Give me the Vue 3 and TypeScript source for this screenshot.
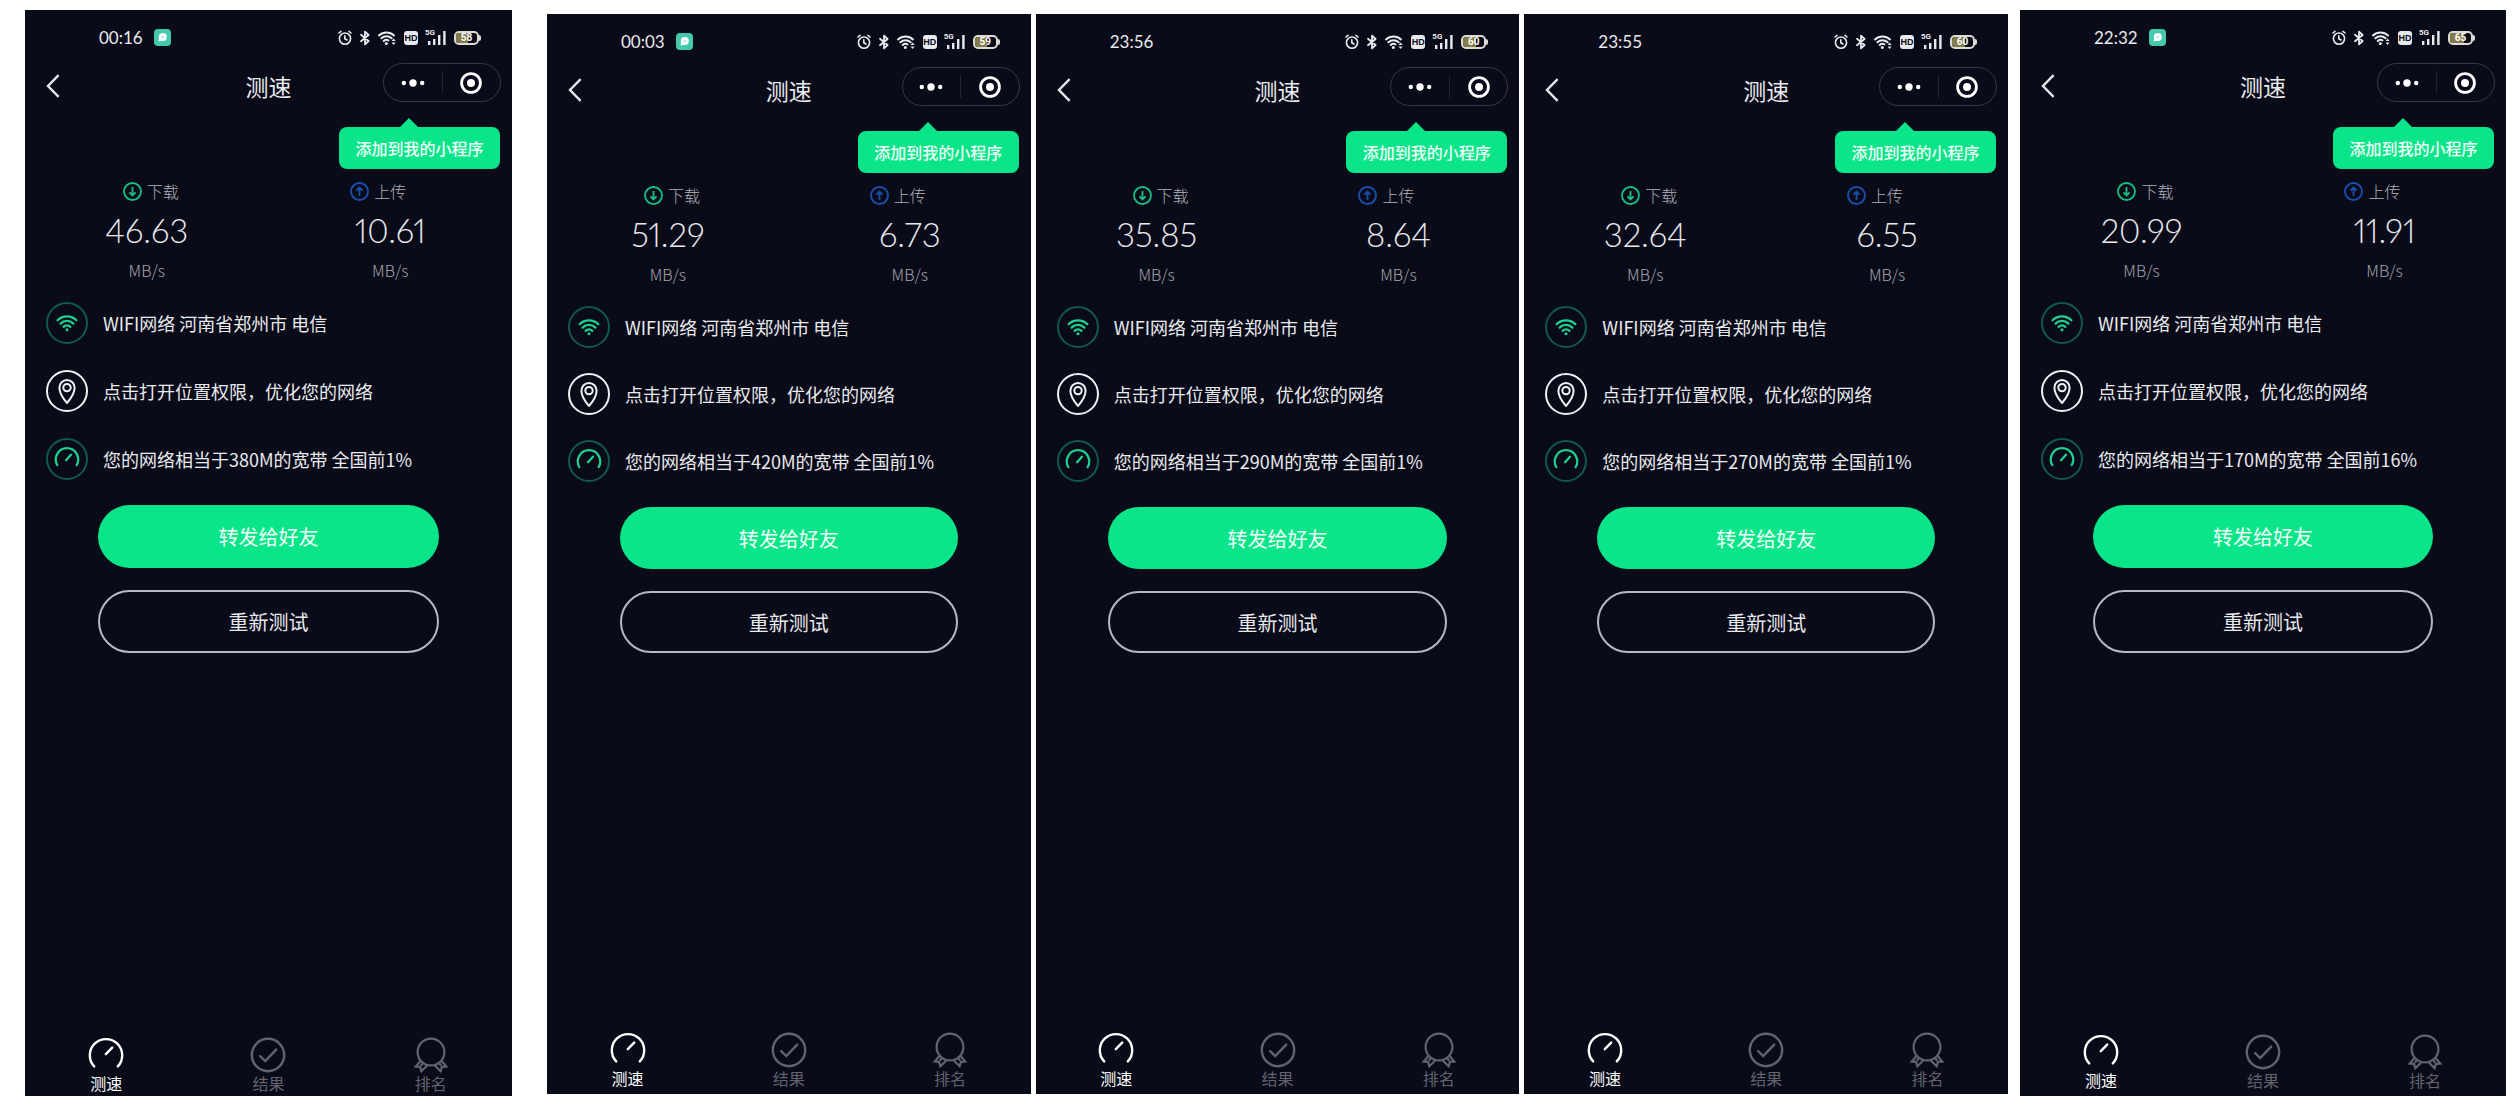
<script setup lang="ts">
interface Screen {
  id: number
  time: string
  chat: boolean
  battery: number
  download: string
  upload: string
  bandwidth: string
  rank: string
  size: 'tall' | 'regular'
  lowTabs?: boolean
}

const groups: Screen[][] = [
  [
    { id: 1, time: '00:16', chat: true, battery: 58, download: '46.63', upload: '10.61', bandwidth: '380M', rank: '1%', size: 'tall', lowTabs: true },
  ],
  [
    { id: 2, time: '00:03', chat: true, battery: 59, download: '51.29', upload: '6.73', bandwidth: '420M', rank: '1%', size: 'regular' },
    { id: 3, time: '23:56', chat: false, battery: 60, download: '35.85', upload: '8.64', bandwidth: '290M', rank: '1%', size: 'regular' },
    { id: 4, time: '23:55', chat: false, battery: 60, download: '32.64', upload: '6.55', bandwidth: '270M', rank: '1%', size: 'regular' },
  ],
  [
    { id: 5, time: '22:32', chat: true, battery: 65, download: '20.99', upload: '11.91', bandwidth: '170M', rank: '16%', size: 'tall' },
  ],
]
</script>

<template>
  <main class="board">
    <div v-for="(group, g) in groups" :key="g" class="group">
      <section
        v-for="s in group"
        :key="s.id"
        class="screen"
        :class="[`screen--${s.size}`, { 'screen--low-tabs': s.lowTabs }]"
      >
        <div class="status">
          <span class="time">{{ s.time }}</span>
          <svg v-if="s.chat" class="chat" width="17" height="17" viewBox="0 0 17 17">
            <rect width="17" height="17" rx="4" fill="#44c9ae" />
            <circle cx="8.8" cy="8" r="4" fill="#fff" />
            <path d="M5.4 9 4.4 12.4l3.6-1z" fill="#fff" />
            <circle cx="8.8" cy="8" r="1.1" fill="#9fe3d5" />
          </svg>
          <div class="indicators">
            <svg width="14" height="16" viewBox="0 0 14 16" fill="none" stroke="#e9eaee" stroke-width="1.6" stroke-linecap="round">
              <circle cx="7" cy="8.6" r="5.6" />
              <path d="M1 3 3 1.4M13 3 11 1.4M6.8 5.8V8.8L9 10" />
            </svg>
            <svg width="10" height="16" viewBox="0 0 10 16" fill="none" stroke="#e9eaee" stroke-width="1.8" stroke-linejoin="round" stroke-linecap="round">
              <path d="M1 4.8 8.6 11 5 14.4V1.6L8.6 5 1 11.2" />
            </svg>
            <svg width="18" height="16" viewBox="0 0 18 16" fill="none" stroke="#e9eaee" stroke-width="2" stroke-linecap="round">
              <path d="M1 5.4a11 11 0 0 1 15 0M3.4 8.3a7.4 7.4 0 0 1 10.2 0M5.8 11a4 4 0 0 1 4.6-.6" />
              <circle cx="8.3" cy="13.6" r="1.5" fill="#e9eaee" stroke="none" />
              <path d="M15.6 8.6 17.6 11h-4zM15.6 15 13.6 12.6h4z" fill="#e9eaee" stroke="none" />
            </svg>
            <span class="hd">HD</span>
            <span class="signal">
              <span class="generation">5G</span>
              <svg width="20" height="15" viewBox="0 0 20 15" fill="#e9eaee">
                <rect x="2" y="11" width="2.4" height="4" />
                <rect x="7" y="9" width="2.4" height="6" />
                <rect x="12" y="5" width="2.4" height="10" />
                <rect x="17.2" y="1" width="2.4" height="14" />
              </svg>
            </span>
            <span class="battery">
              <span class="cell">
                <span class="charge" :style="{ width: s.battery + '%' }"></span>
                <span class="percent">{{ s.battery }}</span>
              </span>
              <span class="terminal"></span>
            </span>
          </div>
        </div>

        <header class="header">
          <button class="back" type="button" aria-label="返回">
            <svg width="14" height="24" viewBox="0 0 14 24" fill="none" stroke="#e6e7ec" stroke-width="2.4">
              <path d="M12.6 1.2 2 12l10.6 10.8" />
            </svg>
          </button>
          <h1 class="title">测速</h1>
          <div class="capsule">
            <button type="button" aria-label="更多">
              <svg width="24" height="8" viewBox="0 0 24 8" fill="#fff">
                <circle cx="2.8" cy="4" r="2.2" />
                <circle cx="12" cy="4" r="3.7" />
                <circle cx="21.2" cy="4" r="2.2" />
              </svg>
            </button>
            <span class="divider"></span>
            <button type="button" aria-label="关闭">
              <svg width="22" height="22" viewBox="0 0 22 22">
                <circle cx="11" cy="11" r="9.4" fill="none" stroke="#fff" stroke-width="2.8" />
                <circle cx="11" cy="11" r="4" fill="#fff" />
              </svg>
            </button>
          </div>
        </header>

        <div class="tip">添加到我的小程序</div>

        <div class="metrics">
          <div class="metric">
            <div class="label label--down">
              <svg width="19" height="19" viewBox="0 0 19 19" fill="none" stroke="#19bd84" stroke-width="1.8">
                <circle cx="9.5" cy="9.5" r="8.5" />
                <path d="M9.5 5v8.4M6.4 10.4l3.1 3.1 3.1-3.1" />
              </svg>
              <span>下载</span>
            </div>
            <div class="value">{{ s.download }}</div>
            <div class="unit">MB/s</div>
          </div>
          <div class="metric">
            <div class="label label--up">
              <svg width="19" height="19" viewBox="0 0 19 19" fill="none" stroke="#1a4fb0" stroke-width="1.8">
                <circle cx="9.5" cy="9.5" r="8.5" />
                <path d="M9.5 14V5.6M6.4 8.6l3.1-3.1 3.1 3.1" />
              </svg>
              <span>上传</span>
            </div>
            <div class="value">{{ s.upload }}</div>
            <div class="unit">MB/s</div>
          </div>
        </div>

        <ul class="facts">
          <li>
            <svg width="42" height="42" viewBox="0 0 42 42" fill="none" stroke="#1fd090" stroke-width="2.3" stroke-linecap="round">
              <circle cx="21" cy="21" r="20" stroke="#115a4a" stroke-width="2" />
              <path d="M11.6 18.2a13.4 13.4 0 0 1 18.8 0M14.6 21.6a9 9 0 0 1 12.8 0M17.6 24.8a5 5 0 0 1 6.8 0" />
              <circle cx="21" cy="27.8" r="1.5" fill="#1fd090" stroke="none" />
            </svg>
            <span>WIFI网络 河南省郑州市 电信</span>
          </li>
          <li>
            <svg width="42" height="42" viewBox="0 0 42 42" fill="none" stroke="#f0f1f5" stroke-width="2" stroke-linejoin="round">
              <circle cx="21" cy="21" r="20" />
              <path d="M21 33c-2.6-3-7.6-9.4-7.6-15.3a7.6 7.6 0 0 1 15.2 0c0 5.9-5 12.3-7.6 15.3z" />
              <circle cx="21" cy="17.6" r="3.7" />
            </svg>
            <span>点击打开位置权限，优化您的网络</span>
          </li>
          <li>
            <svg width="42" height="42" viewBox="0 0 42 42" fill="none" stroke="#1fd090" stroke-width="2.3" stroke-linecap="round">
              <circle cx="21" cy="21" r="20" stroke="#115a4a" stroke-width="2" />
              <path d="M11.3 27a11.2 11.2 0 1 1 19.4 0M20 22.2l5-5.4" />
            </svg>
            <span>您的网络相当于{{ s.bandwidth }}的宽带 全国前{{ s.rank }}</span>
          </li>
        </ul>

        <div class="actions">
          <button class="action action--primary" type="button">转发给好友</button>
          <button class="action action--outline" type="button">重新测试</button>
        </div>

        <nav class="tabs">
          <a class="tab tab--active" href="#speed">
            <svg width="36" height="36" viewBox="0 0 36 36" fill="none" stroke="currentColor" stroke-width="2.4" stroke-linecap="round">
              <path d="M6.2 29.4a16.2 16.2 0 1 1 23.6 0M17.8 17.2l6.4-6.6" />
            </svg>
            <span>测速</span>
          </a>
          <a class="tab" href="#result">
            <svg width="36" height="36" viewBox="0 0 36 36" fill="none" stroke="currentColor" stroke-width="2.4" stroke-linecap="round">
              <circle cx="18" cy="18" r="16.2" />
              <path d="M10.2 19.2l5 4.8 11-11.4" />
            </svg>
            <span>结果</span>
          </a>
          <a class="tab" href="#rank">
            <svg width="36" height="36" viewBox="0 0 36 36" fill="none" stroke="currentColor" stroke-width="2.2">
              <circle cx="18" cy="15" r="13.4" />
              <path d="M7.4 24 2.8 29.6l4.2.2 1.4 4.4 6-6M28.6 24l4.6 5.6-4.2.2-1.4 4.4-6-6" />
              <path d="M9.8 26.4l-2 2.4M26.2 26.4l2 2.4" />
            </svg>
            <span>排名</span>
          </a>
        </nav>
      </section>
    </div>
  </main>
</template>

<style>
body {
  background: #fff;
}
</style>

<style scoped>
.board {
  box-sizing: border-box;
  min-height: 100vh;
  padding: 10px 10px 10px 25px;
  display: grid;
  grid-template-columns: 487fr 1484fr 486fr;
  column-gap: 12px;
  font-family: "Noto Sans CJK SC", sans-serif;
  color: #e9eaee;
}

.group {
  display: flex;
  gap: 5px;
}

.group:nth-child(2) {
  padding: 4px 0 2px 23px;
}

.screen {
  --row-gap: 25px;
  --button-height: 62px;
  --tabs-bottom: 5px;
  flex: 1 1 0;
  min-width: 0;
  display: flex;
  flex-direction: column;
  background: #090b19;
}

.screen--tall {
  --row-gap: 26px;
  --button-height: 63px;
}

.screen--low-tabs {
  --tabs-bottom: 2px;
}

button {
  padding: 0;
  border: 0;
  background: none;
  font: inherit;
  color: inherit;
}

svg {
  display: block;
  flex: none;
}

.status {
  box-sizing: border-box;
  height: 53px;
  padding: 2px 31px 0 74px;
  display: flex;
  align-items: center;
}

.time {
  font-family: Lato, sans-serif;
  font-size: 17px;
  line-height: 20px;
}

.chat {
  margin-left: 11px;
}

.indicators {
  margin-left: auto;
  display: flex;
  align-items: center;
  gap: 8px;
}

.hd {
  width: 14px;
  border-radius: 3px;
  background: #e9eaee;
  color: #090b19;
  font: bold 9px/14px "Liberation Sans", sans-serif;
  text-align: center;
}

.signal {
  position: relative;
}

.generation {
  position: absolute;
  left: -1px;
  top: -1px;
  font: bold 8px/8px Roboto, sans-serif;
}

.battery {
  display: flex;
  align-items: center;
}

.cell {
  position: relative;
  box-sizing: border-box;
  width: 25px;
  height: 14px;
  border: 2px solid #dcdcd6;
  border-radius: 5px;
  overflow: hidden;
}

.charge {
  display: block;
  height: 100%;
  background: #857b48;
}

.percent {
  position: absolute;
  inset: 0;
  color: #fff;
  font: bold 10px/10px Roboto, sans-serif;
  text-align: center;
}

.terminal {
  width: 2px;
  height: 6px;
  border-radius: 0 2px 2px 0;
  background: #dcdcd6;
}

.header {
  height: 39px;
  padding: 0 11px 0 21px;
  display: grid;
  grid-template-columns: 1fr auto 1fr;
  align-items: end;
}

.back,
.title {
  height: 32px;
  display: flex;
  align-items: center;
  justify-self: start;
}

.title {
  margin: 0 0 0 -10px;
  font-size: 23px;
  line-height: 32px;
  font-weight: 400;
}

.capsule {
  box-sizing: border-box;
  width: 118px;
  height: 39px;
  border: 1px solid #373843;
  border-radius: 20px;
  justify-self: end;
  display: flex;
  align-items: center;
}

.capsule button {
  flex: 1;
  display: flex;
  justify-content: center;
}

.divider {
  width: 1px;
  height: 23px;
  background: #22232f;
}

.tip {
  position: relative;
  align-self: flex-end;
  box-sizing: border-box;
  width: 161px;
  margin: 25px 12px 0 0;
  border-radius: 8px;
  background: #0ae58a;
  color: #f2fff9;
  font-size: 16px;
  line-height: 42px;
  font-weight: 500;
  text-align: center;
}

.tip::before {
  content: "";
  position: absolute;
  right: 93px;
  top: -9px;
  border: 9px solid transparent;
  border-top-width: 0;
  border-bottom-color: #0ae58a;
  margin-right: -11px;
}

.metrics {
  margin-top: 11px;
  display: grid;
  grid-template-columns: 1fr 1fr;
  text-align: center;
}

.label {
  display: flex;
  justify-content: center;
  align-items: center;
  gap: 5px;
  color: #b0b1b9;
  font-size: 16px;
  line-height: 22px;
  font-weight: 300;
}

.label--down {
  padding-left: 8px;
}

.label--up {
  padding-right: 24px;
}

.value {
  margin-top: 8px;
  font-family: Lato, sans-serif;
  font-size: 33px;
  line-height: 40px;
  font-weight: 300;
  font-variant-numeric: proportional-nums;
}

.unit {
  margin-top: 10px;
  color: #a3a4ad;
  font-size: 16px;
  line-height: 20px;
  font-weight: 300;
}

.facts {
  margin: 22px 0 0;
  padding: 0 0 0 21px;
  list-style: none;
  display: flex;
  flex-direction: column;
  gap: var(--row-gap);
}

.facts li {
  display: flex;
  align-items: center;
  gap: 15px;
  font-size: 18px;
  line-height: 24px;
  white-space: nowrap;
}

.actions {
  margin-top: 25px;
  padding: 0 15%;
  display: flex;
  flex-direction: column;
  gap: 22px;
}

.action {
  box-sizing: border-box;
  height: var(--button-height);
  border-radius: 32px;
  font-size: 20px;
}

.action--primary {
  background: #0ae58a;
  color: #f2fff9;
}

.action--outline {
  border: 2px solid #b7b8c1;
}

.tabs {
  margin-top: auto;
  padding-bottom: var(--tabs-bottom);
  display: grid;
  grid-template-columns: repeat(3, 1fr);
}

.tab {
  display: flex;
  flex-direction: column;
  align-items: center;
  color: #62636f;
  font-size: 16px;
  line-height: 21px;
  text-decoration: none;
}

.tab--active {
  color: #fff;
}
</style>
